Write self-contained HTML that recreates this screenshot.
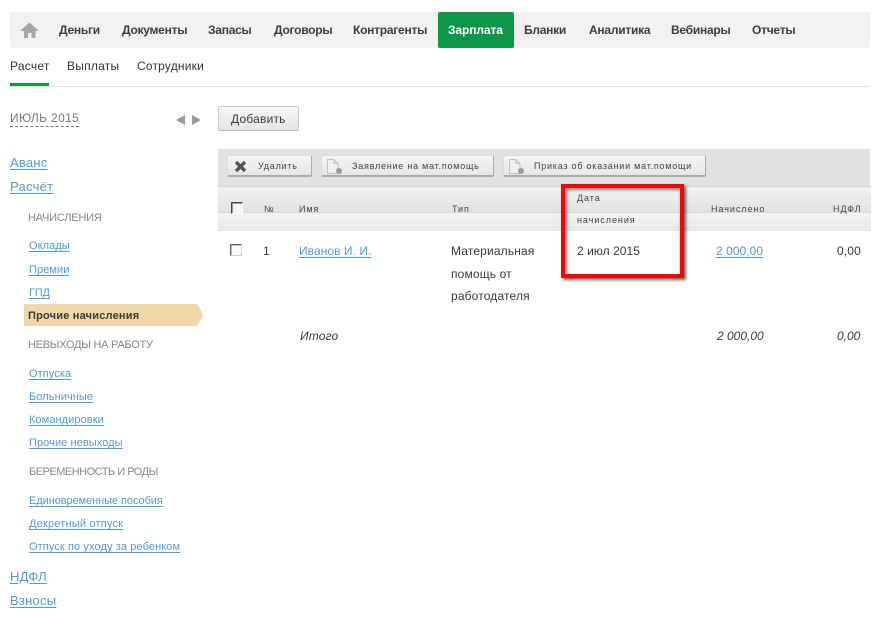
<!DOCTYPE html>
<html lang="ru"><head><meta charset="utf-8"><title>Зарплата</title>
<style>
html,body{margin:0;padding:0;background:#fff}
body{width:883px;height:619px;position:relative;overflow:hidden;font-family:"Liberation Sans",sans-serif;font-size:12px;color:#333}
.a{position:absolute;white-space:nowrap;line-height:16px}
.b{position:absolute}
.n{font-weight:bold;color:#3c3c3c;top:22px;letter-spacing:-.25px}
.t{font-size:12px;letter-spacing:.15px;color:#3a3a3a}
.l{color:#4f9bdd;text-decoration:underline;text-underline-offset:2px}
.t.l{color:#4f9bdd;letter-spacing:.05px}
.s{font-size:11px;letter-spacing:.08px}
.m{font-size:13px;letter-spacing:.25px}
.g{font-size:11px;color:#888}
.h{font-size:9px;letter-spacing:.95px;color:#444}
.k{font-size:9px;letter-spacing:.77px;color:#444}
.btn{position:absolute;box-sizing:border-box;background:linear-gradient(#f6f6f6,#e6e6e6);border:1px solid #ddd;border-right:1px solid #aaa;border-bottom:2px solid #aaa;border-radius:2px}
.i{font-style:italic}
</style></head><body>
<div class="b" style="left:10px;top:12px;width:860px;height:36px;background:#f2f2f2;border-radius:3px"></div>
<svg class="b" style="left:20px;top:21px" width="20" height="18" viewBox="0 0 20 18"><path d="M1 9 9.500 1.500 18 9v1h-2.500v7H11.500v-5H8v5H4V10H1z" fill="#a6a6a6"/></svg>
<div class="a n" style="left:59px">Деньги</div>
<div class="a n" style="left:122px">Документы</div>
<div class="a n" style="left:208px">Запасы</div>
<div class="a n" style="left:274px">Договоры</div>
<div class="a n" style="left:353px">Контрагенты</div>
<div class="b" style="left:438px;top:12px;width:76px;height:36px;background:#0e9648;border-radius:2px"></div>
<div class="a n" style="left:448px;color:#fff;letter-spacing:-.1px">Зарплата</div>
<div class="a n" style="left:524px">Бланки</div>
<div class="a n" style="left:589px">Аналитика</div>
<div class="a n" style="left:671px">Вебинары</div>
<div class="a n" style="left:752px">Отчеты</div>

<div class="a" style="left:10px;top:58px;letter-spacing:.25px">Расчет</div>
<div class="a" style="left:67px;top:58px;letter-spacing:.25px">Выплаты</div>
<div class="a" style="left:137px;top:58px;letter-spacing:.2px">Сотрудники</div>
<div class="b" style="left:10px;top:86px;width:860px;height:1px;background:#e3e3e3"></div>
<div class="b" style="left:10px;top:83px;width:39px;height:3px;background:#0e9648"></div>

<div class="a" style="left:10px;top:111px;font-size:12px;letter-spacing:.35px;color:#777;border-bottom:1px dashed #777;line-height:15px">ИЮЛЬ 2015</div>
<div class="b" style="left:176px;top:115px;border-style:solid;border-width:5px 9px 5px 0;border-color:transparent #999 transparent transparent"></div>
<div class="b" style="left:192px;top:115px;border-style:solid;border-width:5px 0 5px 9px;border-color:transparent transparent transparent #999"></div>
<div class="btn" style="left:218px;top:106px;width:81px;height:25px;border:1px solid #ccc;border-bottom:1px solid #bbb"></div>
<div class="a" style="left:231px;top:111px;letter-spacing:.2px;color:#3a3a3a">Добавить</div>

<div class="a l m" style="left:10px;top:155px">Аванс</div>
<div class="a l m" style="left:10px;top:179px">Расчёт</div>
<div class="a g" style="left:28px;top:210px;letter-spacing:-.2px">НАЧИСЛЕНИЯ</div>
<div class="a l s" style="left:29px;top:238px">Оклады</div>
<div class="a l s" style="left:29px;top:262px">Премии</div>
<div class="a l s" style="left:29px;top:285px;letter-spacing:-.2px">ГПД</div>
<svg class="b" style="left:24px;top:304px" width="180" height="22" viewBox="0 0 180 22"><path d="M0 0H173L179.500 11 173 22H0z" fill="#f1d6a8"/></svg>
<div class="a" style="left:28px;top:308px;font-size:11px;font-weight:bold;letter-spacing:.2px;color:#3a3a3a">Прочие начисления</div>
<div class="a g" style="left:28px;top:337px;letter-spacing:-.27px">НЕВЫХОДЫ НА РАБОТУ</div>
<div class="a l s" style="left:29px;top:366px">Отпуска</div>
<div class="a l s" style="left:29px;top:389px">Больничные</div>
<div class="a l s" style="left:29px;top:412px">Командировки</div>
<div class="a l s" style="left:29px;top:435px">Прочие невыходы</div>
<div class="a g" style="left:29px;top:464px;letter-spacing:-.5px">БЕРЕМЕННОСТЬ И РОДЫ</div>
<div class="a l s" style="left:29px;top:493px;letter-spacing:-.07px">Единовременные пособия</div>
<div class="a l s" style="left:29px;top:516px;letter-spacing:.2px">Декретный отпуск</div>
<div class="a l s" style="left:29px;top:539px;letter-spacing:.1px">Отпуск по уходу за ребенком</div>
<div class="a l m" style="left:10px;top:569px">НДФЛ</div>
<div class="a l m" style="left:10px;top:593px">Взносы</div>

<div class="b" style="left:218px;top:149px;width:652px;height:37px;background:#e2e2e2"></div>
<div class="b" style="left:218px;top:186px;width:653px;height:26px;background:linear-gradient(#f3f3f3,#e2e2e2);border-top:1px solid #d4d4d4;box-sizing:border-box"></div>
<div class="b" style="left:218px;top:212px;width:653px;height:19px;background:linear-gradient(#f4f4f4,#e8e8e8);border-top:1px solid #d8d8d8;box-sizing:border-box"></div>

<div class="btn" style="left:227px;top:155px;width:85px;height:22px"></div>
<svg class="b" style="left:234px;top:160px" width="13" height="13" viewBox="0 0 13 13"><path d="M2 2 11 11M11 2 2 11" stroke="#555" stroke-width="3.400"/></svg>
<div class="a k" style="left:258px;top:158px">Удалить</div>
<div class="btn" style="left:321px;top:155px;width:173px;height:22px"></div>
<svg class="b" style="left:327px;top:159px" width="17" height="16" viewBox="0 0 17 16"><path d="M.5.500H7l4 4V14.500H.5z" fill="#f0f0f0" stroke="#c0c0c0"/><path d="M7 .5v4h4" fill="#ddd" stroke="#c0c0c0"/><circle cx="12" cy="12" r="3" fill="#9a9a9a"/></svg>
<div class="a k" style="left:352px;top:158px">Заявление на мат.помощь</div>
<div class="btn" style="left:503px;top:155px;width:203px;height:22px"></div>
<svg class="b" style="left:509px;top:159px" width="17" height="16" viewBox="0 0 17 16"><path d="M.5.500H7l4 4V14.500H.5z" fill="#f0f0f0" stroke="#c0c0c0"/><path d="M7 .5v4h4" fill="#ddd" stroke="#c0c0c0"/><circle cx="12" cy="12" r="3" fill="#9a9a9a"/></svg>
<div class="a k" style="left:534px;top:158px">Приказ об оказании мат.помощи</div>

<div class="b" style="left:231px;top:202px;width:12px;height:12px;box-sizing:border-box;background:#f6f6f6;border:1px solid #fff;border-top:1px solid #444;border-left:1px solid #444;box-shadow:inset 1px 1px 0 #999"></div>
<div class="a h" style="left:264px;top:201px">№</div>
<div class="a h" style="left:299px;top:201px">Имя</div>
<div class="a h" style="left:452px;top:201px">Тип</div>
<div class="a h" style="left:577px;top:190px">Дата</div>
<div class="a h" style="left:577px;top:212px">начисления</div>
<div class="a h" style="left:711px;top:201px">Начислено</div>
<div class="a h" style="left:833px;top:201px">НДФЛ</div>

<div class="b" style="left:230px;top:244px;width:12px;height:12px;box-sizing:border-box;background:#fcfcfc;border:1px solid #ccc;border-top:1px solid #666;border-left:1px solid #666;box-shadow:inset 1px 1px 0 #bbb"></div>
<div class="a t" style="left:263px;top:243px">1</div>
<div class="a t l" style="left:299px;top:243px">Иванов И. И.</div>
<div class="a t" style="left:451px;top:243px">Материальная</div>
<div class="a t" style="left:451px;top:266px">помощь от</div>
<div class="a t" style="left:451px;top:288px">работодателя</div>
<div class="a t" style="left:577px;top:243px;letter-spacing:.05px">2 июл 2015</div>
<div class="a t l" style="left:716px;top:243px">2 000,00</div>
<div class="a t" style="left:837px;top:243px">0,00</div>
<div class="a t i" style="left:300px;top:328px">Итого</div>
<div class="a t i" style="left:717px;top:328px;letter-spacing:0">2 000,00</div>
<div class="a t i" style="left:837px;top:328px;letter-spacing:0">0,00</div>

<div class="b" style="left:561px;top:184px;width:123px;height:94px;box-sizing:border-box;border:4px solid #f00;box-shadow:2px 2px 3px rgba(0,0,0,.6),inset 2px 2px 3px rgba(0,0,0,.45)"></div>
</body></html>
